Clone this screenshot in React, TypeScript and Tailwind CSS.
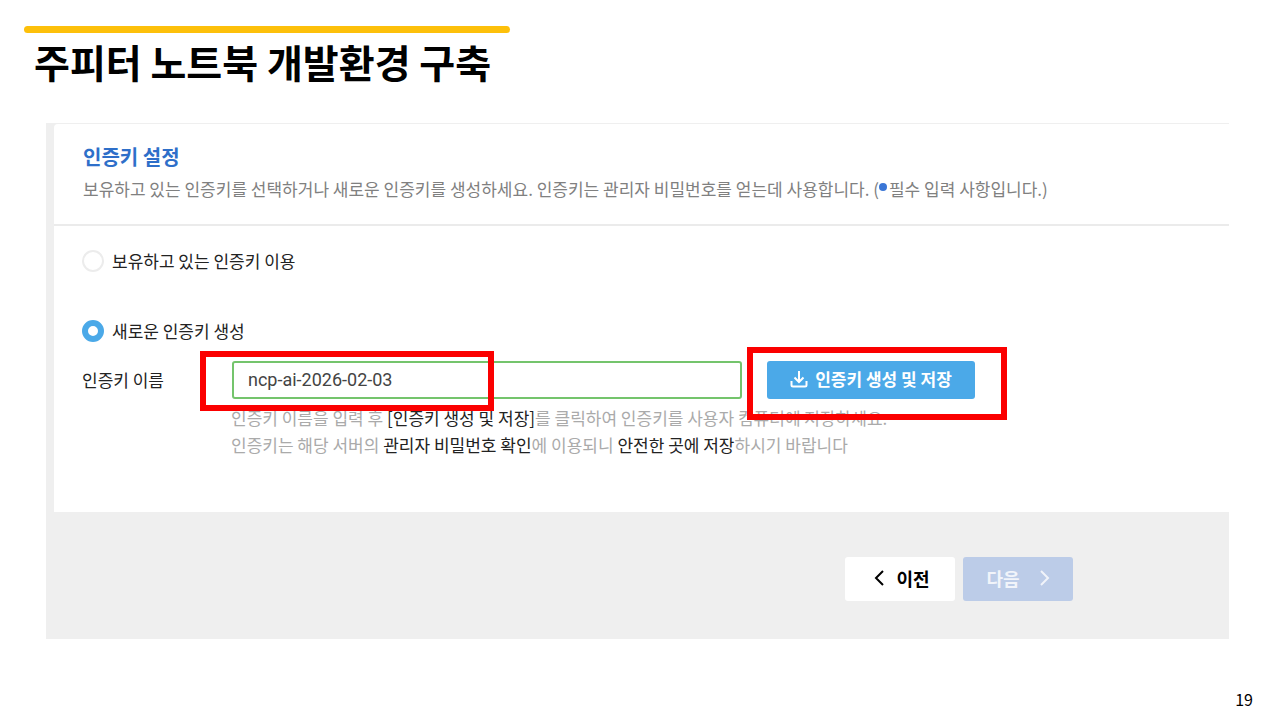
import React, { useState } from 'react'

type RadioProps = {
    label: string;
    value: string;
    selected: string;
    onSelect: (value: string) => void;
}

function KeyRadio({ label, value, selected, onSelect }: RadioProps) {
  return (
    <label className="flex items-center gap-2 text-[17px] leading-6 text-[#222222]">
        <input
            type="radio"
            name="keyMode"
            value={value}
            checked={selected === value}
            onChange={() => onSelect(value)}
            className="h-[22px] w-[22px] shrink-0 appearance-none rounded-full border-2 border-[#ececec] bg-white
            checked:border-[6px] checked:border-[#4ba9e8]"
        />
        {label}
    </label>
  )
}

export default function App() {
  const [mode, setMode] = useState('new')
  const [keyName, setKeyName] = useState('ncp-ai-2026-02-03')

  return (
    <main className="flex min-h-screen flex-col bg-white font-['Noto_Sans_CJK_KR',sans-serif] text-black">
        <header className="px-6 pt-[26px]">
            <div className="h-[7px] w-[486px] max-w-full rounded-sm bg-[#fdc00a]" />
            <h1 className="pl-[10px] pt-1 text-[39px] font-bold leading-[48px]">주피터 노트북 개발환경 구축</h1>
        </header>

        <section className="ml-[46px] mr-[51px] mt-[38px] bg-[#efefef] pb-[38px] pl-2 pt-[1px]">
            <div className="rounded-tl bg-white pb-[54px]">
                <div className="border-b-2 border-[#ebebeb] pb-[21px] pl-[29px] pt-[19px]">
                    <h2 className="text-[20px] font-bold leading-7 text-[#2e6fc9]">인증키 설정</h2>
                    <p className="mt-1 text-[17px] leading-7 text-[#808080]">
                        보유하고 있는 인증키를 선택하거나 새로운 인증키를 생성하세요. 인증키는 관리자 비밀번호를 얻는데 사용합니다. (
                        <span className="mb-2 mr-[2px] inline-block h-2 w-2 rounded-full bg-[#3a76d6] align-middle" />
                        필수 입력 사항입니다.)
                    </p>
                </div>

                <form className="pl-7 pt-[23px]" onSubmit={(e) => e.preventDefault()}>
                    <KeyRadio label="보유하고 있는 인증키 이용" value="existing" selected={mode} onSelect={setMode} />
                    <div className="mt-[46px]">
                        <KeyRadio label="새로운 인증키 생성" value="new" selected={mode} onSelect={setMode} />
                    </div>

                    <div className="mt-[18px] flex items-center">
                        <label htmlFor="keyName" className="w-[150px] shrink-0 text-[17px] leading-6 text-[#222222]">
                            인증키 이름
                        </label>
                        <div className="relative w-[510px]">
                            <input
                                id="keyName"
                                type="text"
                                value={keyName}
                                onChange={(e) => setKeyName(e.target.value)}
                                className="block h-[38px] w-full rounded-[3px] border-2 border-[#74c46c] bg-white px-[14px]
                                pb-[2px] font-[Roboto,sans-serif] text-[18px] text-[#444444] outline-none"
                            />
                            <div className="pointer-events-none absolute -left-8 -top-[10px] z-10 h-[60px] w-[294px] border-[6px] border-[#fb0000]" />
                        </div>
                        <div className="relative ml-[25px] shrink-0">
                            <button
                                type="button"
                                className="flex h-[38px] w-[208px] items-center justify-center gap-[7px] rounded-[3px] bg-[#4ba9e8]
                                pb-[2px] text-[17px] font-bold text-white"
                            >
                                <svg className="h-[18px] w-[18px]" viewBox="0 0 18 18" fill="none" stroke="currentColor" strokeWidth="2">
                                    <path d="M9 1v11M4.5 7.5L9 12l4.5-4.5M1.5 11v4a1.5 1.5 0 0 0 1.5 1.5h12a1.5 1.5 0 0 0 1.5-1.5v-4" />
                                </svg>
                                인증키 생성 및 저장
                            </button>
                            <div className="pointer-events-none absolute -left-5 -right-8 -top-[14px] z-10 h-[73px] border-[6px] border-[#fb0000]" />
                        </div>
                    </div>

                    <p className="ml-[149px] mt-[5px] text-[17px] leading-[27px] text-[#aaaaaa]">
                        인증키 이름을 입력 후 <span className="text-[#222222]">[인증키 생성 및 저장]</span>를 클릭하여 인증키를 사용자 컴퓨터에 저장하세요.
                        <br />
                        인증키는 해당 서버의 <span className="text-[#222222]">관리자 비밀번호 확인</span>에 이용되니{' '}
                        <span className="text-[#222222]">안전한 곳에 저장</span>하시기 바랍니다
                    </p>
                </form>
            </div>

            <div className="mt-[45px] flex justify-end gap-2 pr-[156px] text-[18px] font-bold">
                <button type="button" className="flex h-11 w-[110px] items-center justify-center gap-3 rounded-[3px] bg-white pb-[2px] pl-1">
                    <svg className="h-4 w-[10px]" viewBox="0 0 10 16" fill="none" stroke="currentColor" strokeWidth="2">
                        <path d="M9 1L2 8l7 7" />
                    </svg>
                    이전
                </button>
                <button
                    type="button"
                    disabled
                    className="flex h-11 w-[110px] items-center justify-center gap-5 rounded-[3px] bg-[#bccce8] pb-[2px] text-[#f1f4fa]"
                >
                    다음
                    <svg className="h-4 w-[10px]" viewBox="0 0 10 16" fill="none" stroke="currentColor" strokeWidth="2">
                        <path d="M1 1l7 7-7 7" />
                    </svg>
                </button>
            </div>
        </section>

        <footer className="mt-auto pb-[9px] pr-[27px] text-right text-[16px] leading-6">19</footer>
    </main>
  )
}
